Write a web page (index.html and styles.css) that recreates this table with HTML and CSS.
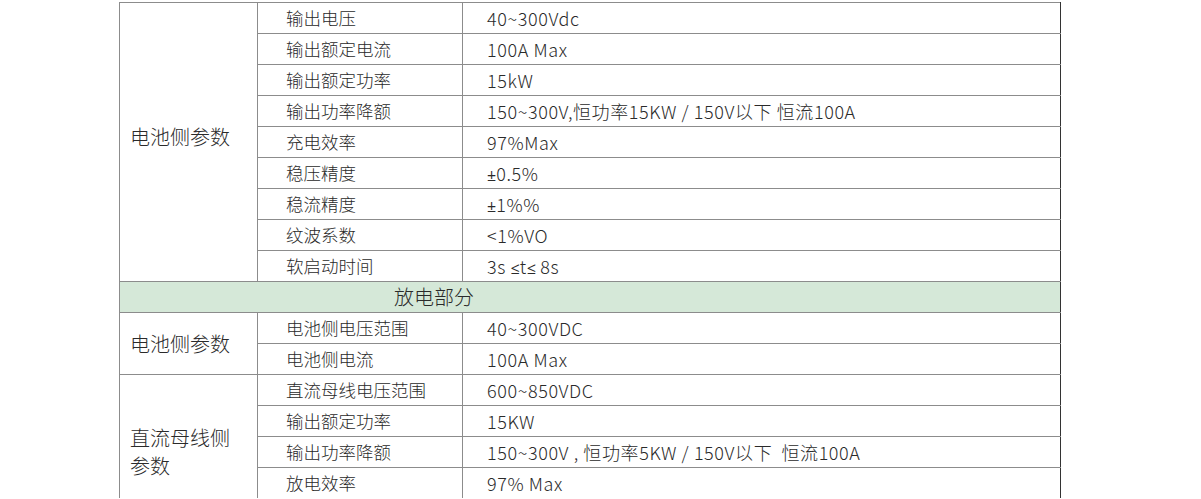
FILE: index.html
```html
<!DOCTYPE html>
<html lang="zh-CN">
<head>
<meta charset="utf-8">
<link rel="stylesheet" href="styles.css">
</head>
<body>
<div class="page">
<table class="spec">
<colgroup><col class="c1"><col class="c2"><col class="c3"></colgroup>
<tbody>
<tr><td class="group top" rowspan="9">电池侧参数</td><td class="name">输出电压</td><td class="val">40~300Vdc</td></tr>
<tr><td class="name">输出额定电流</td><td class="val">100A Max</td></tr>
<tr><td class="name">输出额定功率</td><td class="val">15kW</td></tr>
<tr><td class="name">输出功率降额</td><td class="val">150~300V,恒功率15KW / 150V以下 恒流100A</td></tr>
<tr><td class="name">充电效率</td><td class="val">97%Max</td></tr>
<tr><td class="name">稳压精度</td><td class="val"><span class="sym">±</span>0.5%</td></tr>
<tr><td class="name">稳流精度</td><td class="val"><span class="sym">±</span>1%%</td></tr>
<tr><td class="name">纹波系数</td><td class="val">&lt;1%VO</td></tr>
<tr><td class="name">软启动时间</td><td class="val">3s <span class="sym">≤</span>t<span class="sym">≤</span> 8s</td></tr>
<tr class="section"><td colspan="3">放电部分</td></tr>
<tr><td class="group" rowspan="2">电池侧参数</td><td class="name">电池侧电压范围</td><td class="val">40~300VDC</td></tr>
<tr><td class="name">电池侧电流</td><td class="val">100A Max</td></tr>
<tr><td class="group bus" rowspan="4">直流母线侧<br>参数</td><td class="name">直流母线电压范围</td><td class="val">600~850VDC</td></tr>
<tr><td class="name">输出额定功率</td><td class="val">15KW</td></tr>
<tr><td class="name">输出功率降额</td><td class="val">150~300V , 恒功率5KW / 150V以下&nbsp; 恒流100A</td></tr>
<tr class="last"><td class="name">放电效率</td><td class="val">97% Max</td></tr>
</tbody>
</table>
</div>
</body>
</html>
```
FILE: styles.css
```css
html, body {
  margin: 0;
  padding: 0;
  background: #fff;
}
.page {
  padding: 2px 0 0 119px;
}
.spec {
  border-collapse: collapse;
  table-layout: fixed;
  width: 941px;
  font-family: "Noto Sans CJK SC", sans-serif;
  font-weight: 300;
  color: #2a2a2a;
}
.c1 { width: 138px; }
.c2 { width: 205px; }
.c3 { width: 598px; }
.spec td {
  border: 1px solid #8c8c8c;
  height: 30px;
  padding: 0;
  vertical-align: middle;
  line-height: 1;
}
.spec td:last-child {
  border-right-color: #333;
}
.spec .bus,
.spec .last td {
  border-bottom: none;
}
.group {
  font-size: 20px;
  padding-left: 10px !important;
  line-height: 1.4 !important;
}
.group.top {
  padding-bottom: 10px !important;
}
.group.bus {
  padding-top: 30px !important;
}
.name {
  font-size: 17.5px;
  padding-left: 28px !important;
}
.val {
  font-size: 18px;
  letter-spacing: 0.6px;
  padding-left: 24px !important;
}
.sym {
  font-family: "Open Sans", sans-serif;
  font-weight: 400;
  font-size: 16px;
  letter-spacing: 0;
}
.section td {
  background: #d5e8d8;
  font-size: 20px;
  padding-left: 274px !important;
}
```
